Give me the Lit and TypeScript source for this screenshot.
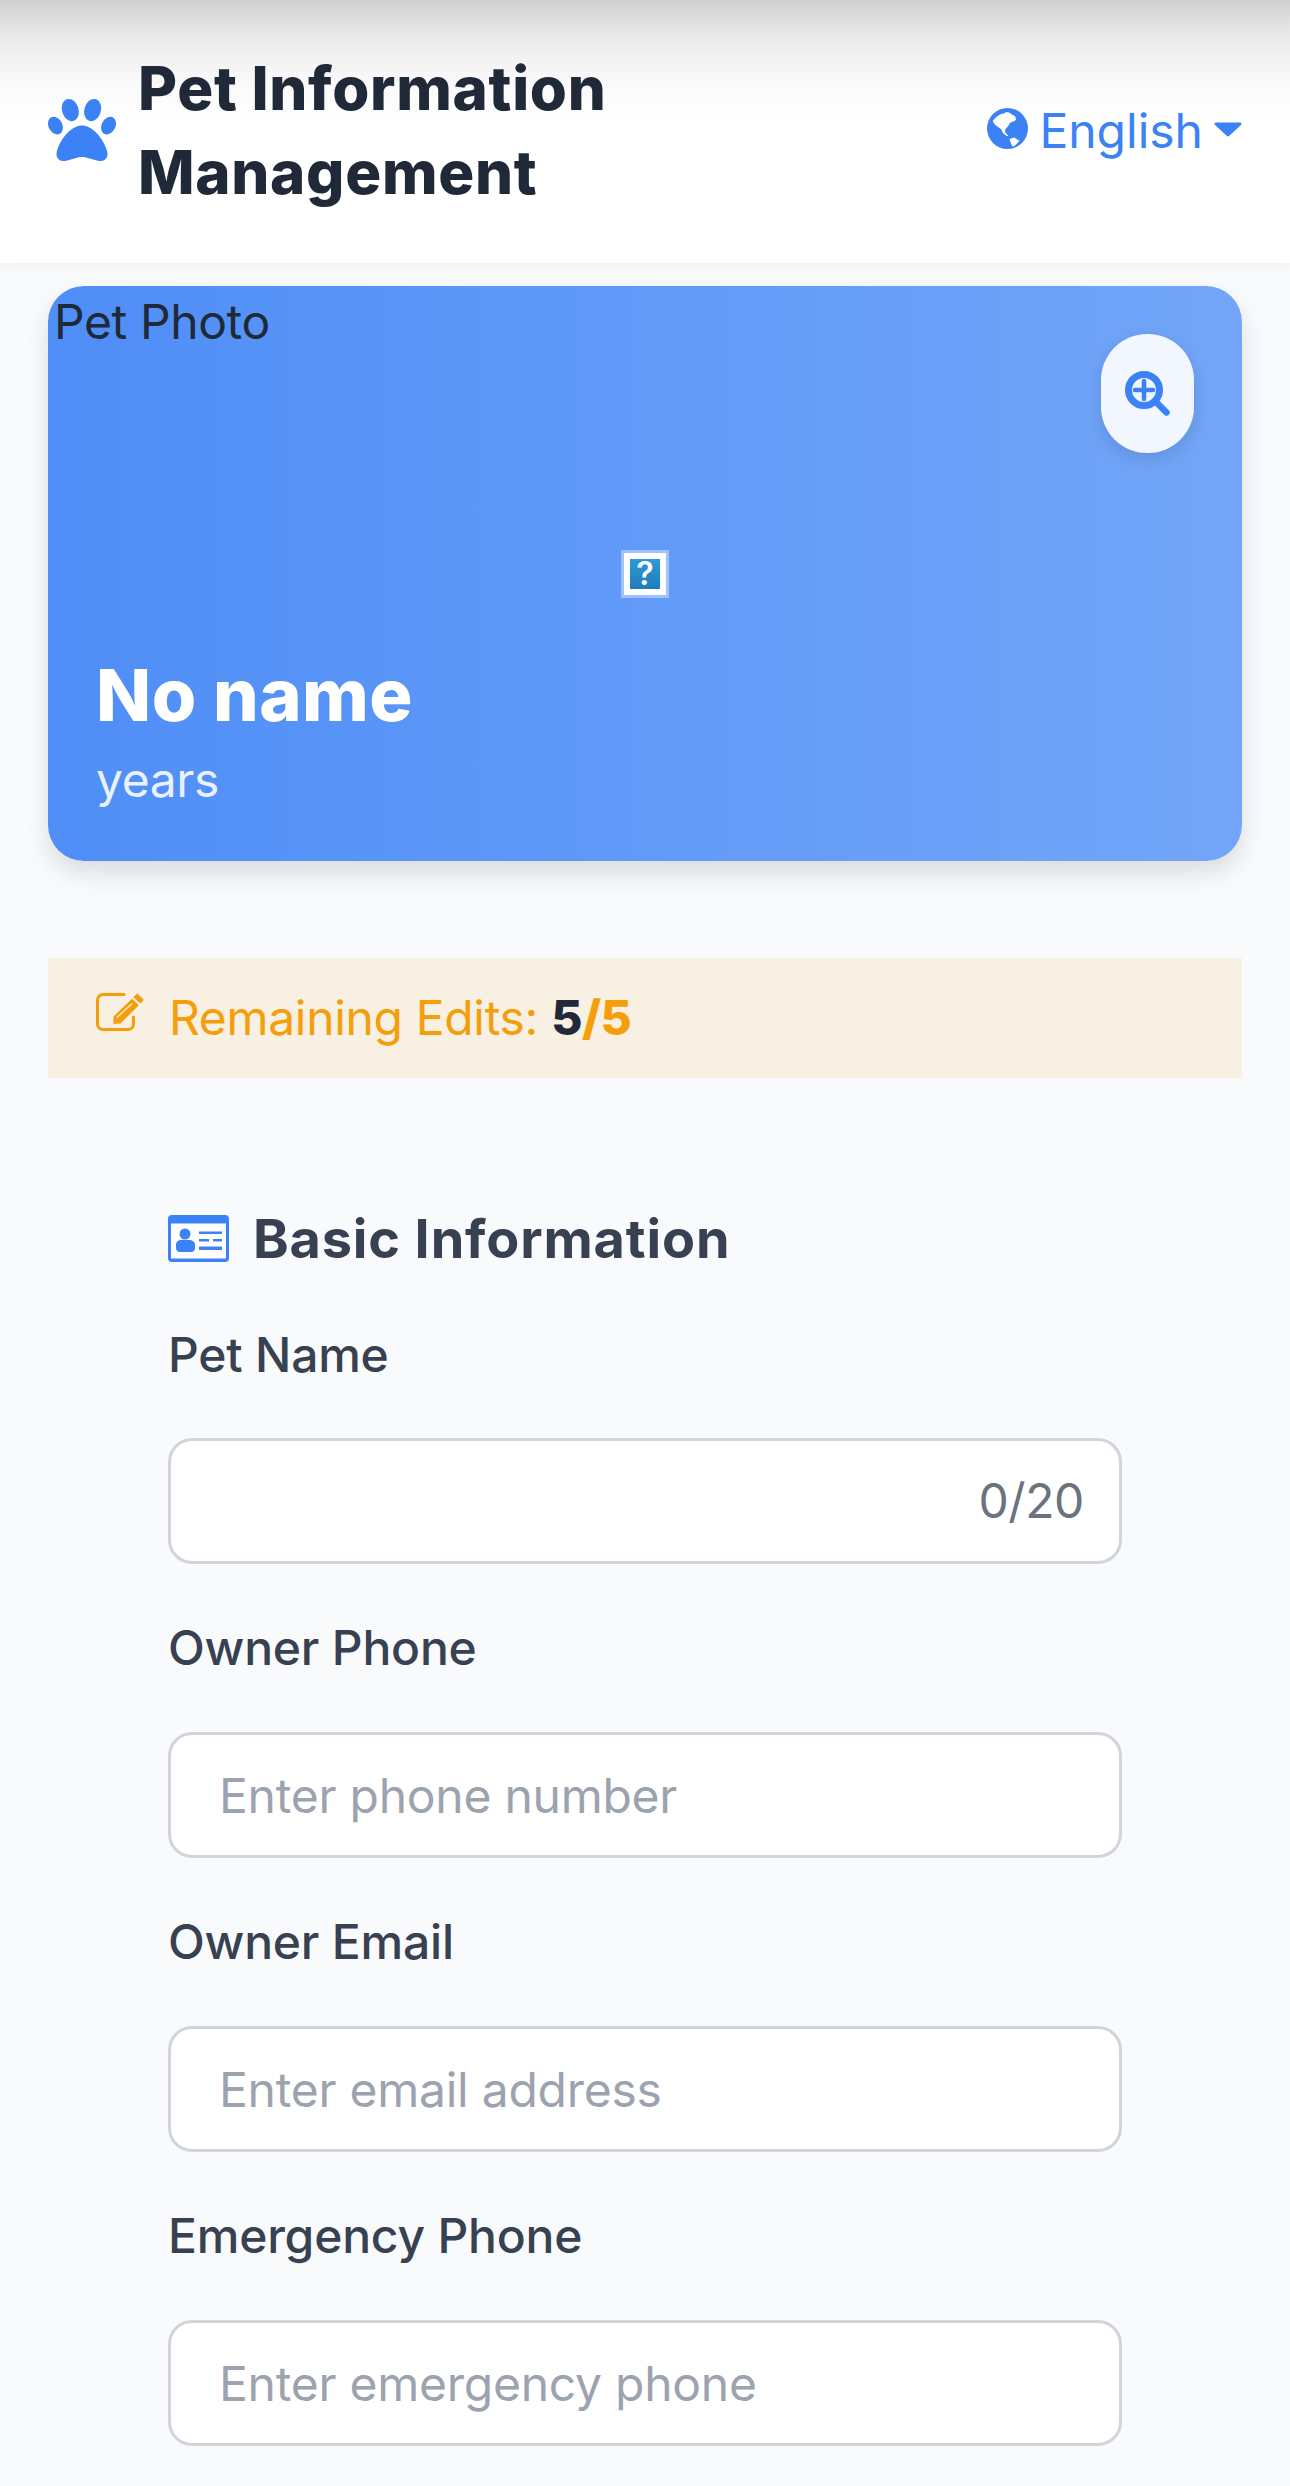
import { LitElement, html, css } from "lit";
import { customElement } from "lit/decorators.js";

const fields = [
  { label: "Pet Name", placeholder: "", counter: "0/20" },
  { label: "Owner Phone", placeholder: "Enter phone number", counter: "" },
  { label: "Owner Email", placeholder: "Enter email address", counter: "" },
  { label: "Emergency Phone", placeholder: "Enter emergency phone", counter: "" },
];

@customElement("app-root")
export class AppRoot extends LitElement {
  static styles = css`
    :host {
      display: block;
      width: 1290px;
      height: 2486px;
      overflow: hidden;
      background: #f9fafb;
      font-family: Inter, "Liberation Sans", sans-serif;
      font-size: 48px;
      line-height: 72px;
      color: #1f2937;
    }
    * { box-sizing: border-box; }
    .header {
      height: 263px;
      padding: 46px 48px 49px;
      display: flex;
      align-items: center;
      justify-content: space-between;
      background: linear-gradient(180deg, #cfcfcf 0, #e4e4e4 27px, #f1f1f1 55px, #fafafa 85px, #ffffff 125px);
      box-shadow: 0 3px 12px rgba(0, 0, 0, 0.05);
      position: relative;
    }
    .brand { display: flex; align-items: center; gap: 22px; }
    .paw { width: 68px; height: 62px; flex: none; fill: #3b82f6; }
    .title { font-size: 60px; line-height: 84px; font-weight: 800; letter-spacing: 0.7px; color: #1f2937; }
    .lang { display: flex; align-items: center; color: #3b82f6; }
    .lang span { margin-top: 2px; }
    .globe { width: 41px; height: 41px; margin: -3px 11px 0 0; }
    .caret { width: 28px; height: 15px; margin: -1px 0 0 11px; fill: #3b82f6; stroke: #3b82f6; stroke-width: 3; stroke-linejoin: round; }
    main { padding: 23px 48px 0; }
    .card {
      position: relative;
      height: 575px;
      border-radius: 36px;
      background: linear-gradient(90deg, #4f8ef7, #73a6f8);
      box-shadow: 0 12px 24px rgba(0, 0, 0, 0.12);
      display: flex;
      flex-direction: column;
      padding-bottom: 45px;
    }
    .alt { padding-left: 6px; letter-spacing: -0.4px; color: #1f2937; }
    .zoom {
      position: absolute;
      top: 48px;
      right: 48px;
      width: 93px;
      height: 119px;
      border-radius: 46px;
      background: rgba(255, 255, 255, 0.9);
      box-shadow: 0 6px 18px rgba(0, 0, 0, 0.12);
      display: flex;
      align-items: center;
      justify-content: center;
    }
    .zoom svg { width: 45px; height: 45px; fill: none; stroke: #3b82f6; stroke-linecap: round; }
    .broken {
      position: absolute;
      left: 50%;
      top: 50%;
      width: 48px;
      height: 48px;
      transform: translate(-50%, -50%);
      border: 3px solid rgba(255, 255, 255, 0.4);
    }
    .broken span {
      display: flex;
      width: 100%;
      height: 100%;
      align-items: center;
      justify-content: center;
      border: 6px solid #fff;
      background: linear-gradient(180deg, #2f9bd6, #1f7cba);
      color: #fff;
      font-size: 32px;
      line-height: 30px;
      font-weight: 600;
    }
    .who { margin-top: auto; padding-left: 48px; color: #fff; }
    .name { font-size: 72px; line-height: 98px; font-weight: 800; letter-spacing: 0.5px; }
    .age { color: rgba(255, 255, 255, 0.9); letter-spacing: -0.4px; }
    .notice {
      margin-top: 97px;
      height: 120px;
      padding: 0 48px;
      display: flex;
      align-items: center;
      gap: 25px;
      background: #f8f0e3;
      color: #f59e0b;
      letter-spacing: -0.33px;
    }
    .notice svg { width: 48px; height: 38px; flex: none; margin-top: -12px; }
    .notice b { font-weight: 800; letter-spacing: -0.6px; }
    .notice .left { color: #1f2937; }
    .form { padding: 120px 120px 0; }
    .section { display: flex; align-items: center; gap: 24px; font-size: 54px; line-height: 81px; font-weight: 700; letter-spacing: 0.85px; color: #374151; margin-bottom: 40px; }
    .section svg { width: 61px; height: 47px; flex: none; }
    .field { margin-bottom: 48px; }
    label { display: block; font-weight: 500; letter-spacing: -0.2px; color: #374151; margin-bottom: 47px; }
    .field + .field label { margin-bottom: 48px; }
    .box { position: relative; }
    input {
      display: block;
      width: 100%;
      height: 126px;
      padding: 0 48px;
      border: 3px solid #d1d5db;
      border-radius: 24px;
      background: #fff;
      font: inherit;
      letter-spacing: -0.25px;
      color: #1f2937;
      outline: none;
    }
    input::placeholder { color: #9ca3af; opacity: 1; }
    .count { position: absolute; right: 38px; top: 27px; letter-spacing: -0.4px; color: #6b7280; }
  `;

  render() {
    return html`
      <header class="header">
        <div class="brand">
          <svg class="paw" viewBox="0 32 512 448" preserveAspectRatio="none"><path d="M226.5 92.9c14.3 42.9-.3 86.2-32.6 96.8s-70.1-15.6-84.4-58.5s.3-86.2 32.6-96.8s70.1 15.6 84.4 58.5zM100.4 198.6c18.9 32.4 14.3 70.1-10.2 84.1s-59.7-.9-78.5-33.3S-2.7 179.3 21.8 165.3s59.7 .9 78.5 33.3zM69.2 401.2C121.6 259.9 214.7 224 256 224s134.4 35.9 186.8 177.2c3.6 9.7 5.2 20.1 5.2 30.5v1.6c0 25.8-20.9 46.7-46.7 46.7c-11.5 0-22.9-1.4-34-4.2l-88-22c-15.3-3.8-31.3-3.8-46.6 0l-88 22c-11.1 2.8-22.5 4.2-34 4.2C84.9 480 64 459.1 64 433.3v-1.6c0-10.4 1.6-20.8 5.2-30.5zM421.8 282.7c-24.5-14-29.1-51.7-10.2-84.1s54-47.3 78.5-33.3s29.1 51.7 10.2 84.1s-54 47.3-78.5 33.3zM310.1 189.7c-32.3-10.6-46.9-53.9-32.6-96.8s52.1-69.1 84.4-58.5s46.9 53.9 32.6 96.8s-52.1 69.1-84.4 58.5z"/></svg>
          <div class="title">Pet Information<br />Management</div>
        </div>
        <div class="lang">
          <svg class="globe" viewBox="23 24 122 122">
            <circle cx="84" cy="85" r="61" fill="#3b82f6"/>
            <path d="M40 62L52 50L64 42L74 40L80 36L90 38L98 44L106 48L110 58L103 64L96 66L90 70L86 78L80 84L76 92L78 98L86 106L82 108L70 98L66 88L58 82L50 76L44 70Z" fill="#fff"/>
            <path d="M90 116L104 112L120 122L116 126L104 138L98 138L94 128Z" fill="#fff"/>
          </svg>
          <span>English</span>
          <svg class="caret" viewBox="0 0 28 15"><path d="M2 2H26L14 13Z"/></svg>
        </div>
      </header>
      <main>
        <section class="card">
          <div class="alt">Pet Photo</div>
          <div class="broken"><span>?</span></div>
          <div class="zoom">
            <svg viewBox="0 0 45 45"><circle cx="19" cy="19" r="15.5" stroke-width="7"/><path d="M33 33L41.500 41.500" stroke-width="6.500"/><path d="M19 10V28M10 19H28" stroke-width="4.500"/></svg>
          </div>
          <div class="who">
            <div class="name">No name</div>
            <div class="age">years</div>
          </div>
        </section>
        <div class="notice">
          <svg viewBox="0 0 48 38">
            <path d="M28 1.500H7A5.500 5.500 0 0 0 1.500 7V31A5.500 5.500 0 0 0 7 36.500H32A5.500 5.500 0 0 0 37.500 31V24" fill="none" stroke="#f59e0b" stroke-width="3" stroke-linecap="round"/>
            <path d="M17.500 23.500L36 5.800L42.800 12.300L24.500 30.500L17.500 31Z" fill="#f59e0b"/>
            <path d="M37.800 4.200L41.300 1L47.300 6.700L44.500 10Z" fill="#f59e0b" stroke="#f59e0b" stroke-width="1" stroke-linejoin="round"/>
            <path d="M21 24.500L36 10.500" stroke="#f8f0e3" stroke-width="1.200"/>
          </svg>
          <span>Remaining Edits: <b class="left">5</b><b>/5</b></span>
        </div>
        <div class="form">
          <div class="section">
            <svg viewBox="0 0 61 47">
              <rect width="61" height="47" rx="4" fill="#3b82f6"/>
              <rect x="3" y="8.500" width="55" height="35" fill="#fff"/>
              <circle cx="17" cy="19" r="5.500" fill="#3b82f6"/>
              <path d="M8 30C8 26.500 10.500 25 13 25H21C24 25 27 26.500 27 30V33C27 35.500 25.500 37 23 37H12C9.500 37 8 35.500 8 33Z" fill="#3b82f6"/>
              <path d="M31 16.500H54V19H31ZM31 24H41V26.500H31ZM45 24H54V26.500H45ZM31 31.500H54V35H31Z" fill="#3b82f6"/>
            </svg>
            <span>Basic Information</span>
          </div>
          ${fields.map(
            (f) => html`
              <div class="field">
                <label>${f.label}</label>
                <div class="box">
                  <input type="text" placeholder=${f.placeholder} />
                  ${f.counter ? html`<span class="count">${f.counter}</span>` : ""}
                </div>
              </div>
            `
          )}
        </div>
      </main>
    `;
  }
}
